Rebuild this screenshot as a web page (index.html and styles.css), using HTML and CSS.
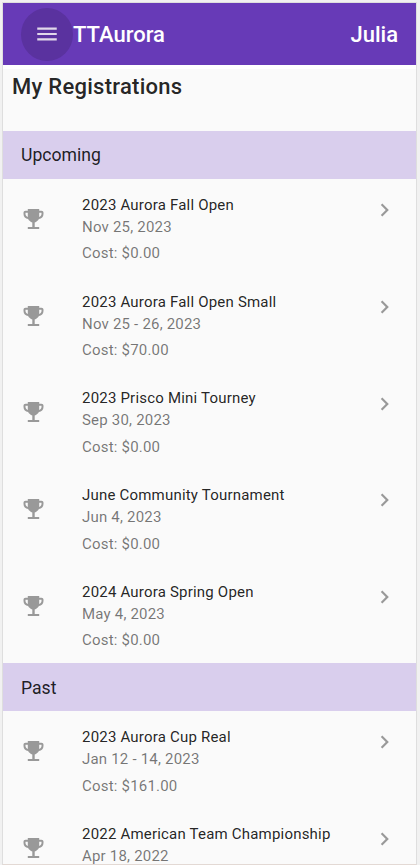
FILE: index.html
```html
<!DOCTYPE html>
<html lang="en">
<head>
<meta charset="utf-8">
<title>TTAurora</title>
<link rel="stylesheet" href="styles.css">
</head>
<body>
<svg class="defs" aria-hidden="true">
  <symbol id="trophy" viewBox="-.5 0 24 24"><path d="M6.300 2h11.400v1.700H20c1.200 0 2 .8 2 2V7c0 2.800-2 4.800-4.600 5.100-.9 1.600-2.400 2.900-4.200 3.400V20h4.500v2H6.300v-2h4.500v-4.500c-1.800-.5-3.300-1.800-4.200-3.400C4 11.800 2 9.800 2 7V5.700c0-1.200.8-2 2-2h2.300zM6.300 5.700H4V7c0 1.300 1 2.500 2.300 2.900zm11.400 0v4.200C19 9.500 20 8.300 20 7V5.700z"/></symbol>
  <symbol id="chevron" viewBox=".45 0 24 24"><path d="M10 6 8.590 7.410 13.170 12l-4.580 4.590L10 18l6-6z"/></symbol>
</svg>
<div class="app">
  <header class="toolbar">
    <button class="menu" aria-label="Menu"><svg viewBox="0 0 24 24"><path d="M3 18h18v-2H3v2zm0-5h18v-2H3v2zm0-7v2h18V6H3z"/></svg></button>
    <span class="brand">TTAurora</span>
    <span class="user">Julia</span>
  </header>
  <h1 class="title">My Registrations</h1>
  <h2 class="section">Upcoming</h2>
  <ul class="list">
    <li class="item"><svg class="trophy"><use href="#trophy"/></svg><div class="text"><p class="name">2023 Aurora Fall Open</p><p class="date">Nov 25, 2023</p><p class="cost">Cost: $0.00</p></div><svg class="chevron"><use href="#chevron"/></svg></li>
    <li class="item"><svg class="trophy"><use href="#trophy"/></svg><div class="text"><p class="name">2023 Aurora Fall Open Small</p><p class="date">Nov 25 - 26, 2023</p><p class="cost">Cost: $70.00</p></div><svg class="chevron"><use href="#chevron"/></svg></li>
    <li class="item"><svg class="trophy"><use href="#trophy"/></svg><div class="text"><p class="name">2023 Prisco Mini Tourney</p><p class="date">Sep 30, 2023</p><p class="cost">Cost: $0.00</p></div><svg class="chevron"><use href="#chevron"/></svg></li>
    <li class="item"><svg class="trophy"><use href="#trophy"/></svg><div class="text"><p class="name">June Community Tournament</p><p class="date">Jun 4, 2023</p><p class="cost">Cost: $0.00</p></div><svg class="chevron"><use href="#chevron"/></svg></li>
    <li class="item"><svg class="trophy"><use href="#trophy"/></svg><div class="text"><p class="name">2024 Aurora Spring Open</p><p class="date">May 4, 2023</p><p class="cost">Cost: $0.00</p></div><svg class="chevron"><use href="#chevron"/></svg></li>
  </ul>
  <h2 class="section past">Past</h2>
  <ul class="list">
    <li class="item"><svg class="trophy"><use href="#trophy"/></svg><div class="text"><p class="name">2023 Aurora Cup Real</p><p class="date">Jan 12 - 14, 2023</p><p class="cost">Cost: $161.00</p></div><svg class="chevron"><use href="#chevron"/></svg></li>
    <li class="item"><svg class="trophy"><use href="#trophy"/></svg><div class="text"><p class="name">2022 American Team Championship</p><p class="date">Apr 18, 2022</p></div><svg class="chevron"><use href="#chevron"/></svg></li>
  </ul>
</div>
</body>
</html>
```
FILE: styles.css
```css
* { box-sizing: border-box; }
body { margin: 0; height: 865px; padding: 2px 3px 0 2px; overflow: hidden; background: #f1f1f1; font-family: Roboto, sans-serif; color: rgba(0,0,0,.87); }
.defs { display: none; }
.app { height: 863px; overflow: hidden; background: #fafafa; border: solid #dedede; border-width: 1px 1px 0 1px; border-bottom: 1px solid #e3d9d4; }
.toolbar { display: flex; align-items: center; height: 62px; padding: 0 18px; background: #673ab7; color: #fff; font-size: 22px; font-weight: 500; }
.menu { display: flex; align-items: center; justify-content: center; width: 52px; height: 53px; padding: 0; border: 0; border-radius: 50%; background: #5a329f; }
.menu svg { width: 26px; height: 26px; fill: #e1d8ea; }
.brand, .user { padding-top: 1px; }
.user { margin-left: auto; }
.title { margin: 0; height: 65.6px; padding: 4px 9px; border-top: 4px solid #fff; font-size: 22px; line-height: 28px; font-weight: 500; letter-spacing: .27px; }
.section { display: flex; align-items: center; margin: 0; height: 48.45px; padding: 0 18px; background: #d9ceed; font-size: 17.6px; font-weight: 400; }
.section.past { padding-top: 1px; }
.list { margin: 0; padding: 0; list-style: none; }
.item { display: flex; height: 96.75px; padding: 14.9px 18px 0; }
.trophy { flex: none; width: 24px; height: 24px; margin: 13px 37px 0 0; fill: #999; }
.text { flex: 1; font-size: 15px; line-height: 22px; letter-spacing: .2px; }
.text p { margin: 0; white-space: nowrap; }
.text .date, .text .cost { color: rgba(0,0,0,.54); }
.text .cost { margin-top: 4.4px; }
.chevron { flex: none; width: 26px; height: 26px; margin-top: 3.2px; fill: #999; }
```
